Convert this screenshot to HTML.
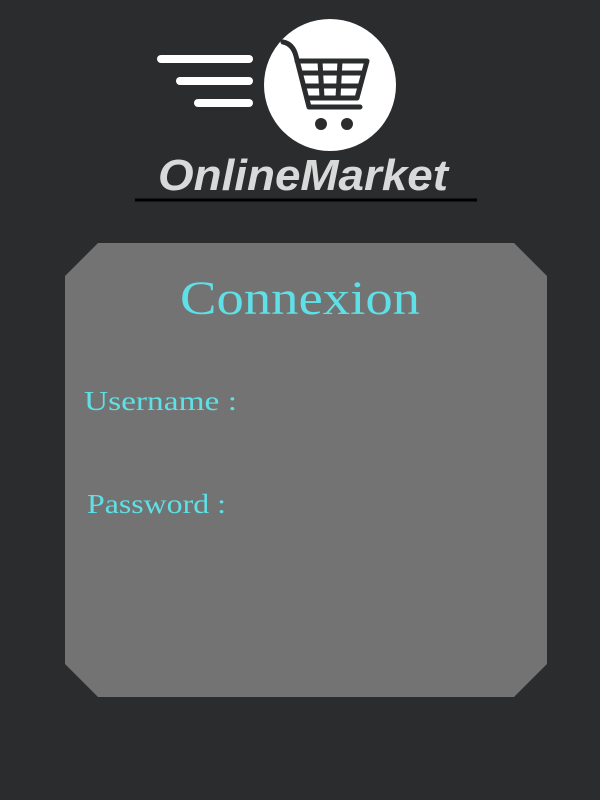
<!DOCTYPE html>
<html><head><style>
body{margin:0;width:600px;height:800px;background:#2b2c2e;position:relative;overflow:hidden;font-family:"Liberation Serif",serif}
.card{position:absolute;left:65px;top:243px;width:482px;height:454px;background:#737373;clip-path:polygon(33px 0,449px 0,482px 33px,482px 421px,449px 454px,33px 454px,0 421px,0 33px)}
.t{position:absolute;color:#5fe0e6;white-space:nowrap}
</style></head><body>
<svg width="600" height="210" style="position:absolute;left:0;top:0">
<g stroke="#fff" stroke-width="8" stroke-linecap="round">
<line x1="161" y1="59" x2="249" y2="59"/><line x1="180" y1="81" x2="249" y2="81"/><line x1="198" y1="103" x2="249" y2="103"/>
</g>
<circle cx="330" cy="85" r="66" fill="#fff"/>
<g fill="none" stroke="#2b2c2e" stroke-width="5" stroke-linecap="round" stroke-linejoin="round">
<path d="M283 42 Q293 44 296 56 L309 107 L360 107"/>
<path d="M297 61 L367 61 L357 98 L307 98"/>
<line x1="301" y1="73" x2="363" y2="73"/><line x1="304" y1="86" x2="360" y2="86"/>
<line x1="320" y1="61" x2="322" y2="98"/><line x1="340" y1="61" x2="338" y2="98"/>
</g>
<circle cx="321" cy="124" r="6" fill="#2b2c2e"/><circle cx="347" cy="124" r="6" fill="#2b2c2e"/>
<text x="303" y="190" text-anchor="middle" font-family="Liberation Sans,sans-serif" font-weight="bold" font-style="italic" font-size="44" fill="#d9d9d9" textLength="290" lengthAdjust="spacingAndGlyphs">OnlineMarket</text>
<line x1="135" y1="200" x2="477" y2="200" stroke="#000" stroke-width="3"/>
</svg>
<div class="card"></div>
<svg width="600" height="800" style="position:absolute;left:0;top:0" font-family="Liberation Serif,serif" fill="#5fe0e6">
<text x="180" y="314" font-size="48" textLength="240" lengthAdjust="spacingAndGlyphs">Connexion</text>
<text x="84" y="410" font-size="27" textLength="153" lengthAdjust="spacingAndGlyphs">Username :</text>
<text x="87" y="513" font-size="27" textLength="139" lengthAdjust="spacingAndGlyphs">Password :</text>
</svg>
</body></html>
